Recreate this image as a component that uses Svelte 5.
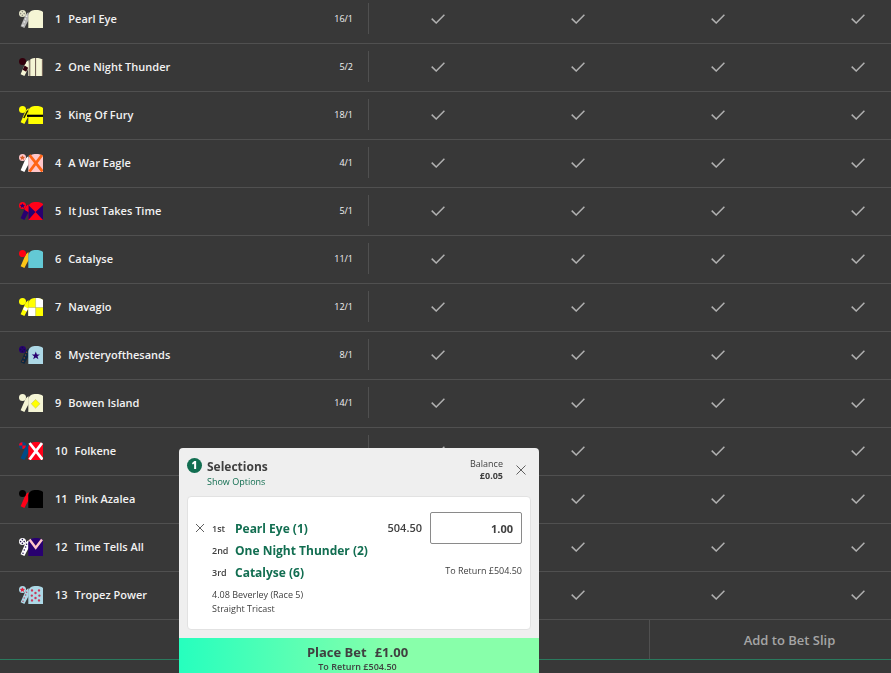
<script lang="ts">
  interface Mark {
    d: string;
    fill?: string;
    stroke?: string;
    width?: number;
  }

  interface Runner {
    name: string;
    odds?: string;
    body: string;
    sleeve: string;
    cap: string;
    marks: Mark[];
  }

  const BODY = 'M9.3 5C10.4 1.2 13 0 17 0c3 0 5.5.6 7 2v16H9.3z';
  const SLEEVE = 'M9.6 2.2C7.6 3 6.4 5 5.4 7.4L1.6 16.2 5.4 18 9.6 10z';
  const CROSS = 'M10.5 1l13 16.5M23 1l-12.5 16.5';
  const STAR =
    'M16.8 5.6l1.1 2.8h3l-2.4 1.9.9 3-2.6-1.7-2.6 1.7.9-3-2.4-1.9h3z';

  const dot = (x: number, y: number, r = 0.8) =>
    `M${x - r} ${y}a${r} ${r} 0 1 0 ${2 * r} 0a${r} ${r} 0 1 0 ${-2 * r} 0z`;

  const capDots = [dot(3.4, 1.6), dot(1.6, 3.6), dot(5.2, 3.6), dot(3.4, 5.4)].join('');
  const capStar = 'M3.4 1.2l.8 1.6 1.8.2-1.3 1.2.4 1.9-1.7-1-1.7 1 .4-1.9L.8 3l1.8-.2z';
  const sleeveDots = [dot(7.6, 6.2), dot(6.6, 9), dot(5.3, 12), dot(4, 15.2)].join('');
  const bodyDots = [
    dot(13, 4.4, 1.2), dot(20, 4.4, 1.2), dot(16.5, 7, 1.2), dot(12.8, 9.6, 1.2),
    dot(20.4, 9.6, 1.2), dot(16.5, 12, 1.2), dot(13, 14.4, 1.2), dot(20, 14.4, 1.2)
  ].join('');

  const runners: Runner[] = [
    {
      name: 'Pearl Eye', odds: '16/1', body: '#f5f5d5', sleeve: '#b4b4b4', cap: '#e6e6cb',
      marks: [{ d: capDots, fill: '#8c8c80' }, { d: sleeveDots, fill: '#f2f2f2' }]
    },
    {
      name: 'One Night Thunder', odds: '5/2', body: '#f5f5d5', sleeve: '#f5f5d5', cap: '#33000c',
      marks: [
        { d: 'M10.8 2v16M16.6 0v18M23.4 1.5V18', stroke: '#67544c', width: 1 },
        { d: 'M5.6 7.4l3.6 2.4-2 4-3.6-2z', fill: '#33000c' }
      ]
    },
    {
      name: 'King Of Fury', odds: '18/1', body: '#ffff00', sleeve: '#ffff00', cap: '#ffff00',
      marks: [
        { d: 'M8 9.8h16', stroke: '#000000', width: 2.2 },
        { d: 'M8.8 4.5L4.8 12', stroke: '#222200', width: 1.5 }
      ]
    },
    {
      name: 'A War Eagle', odds: '4/1', body: '#ffc6c9', sleeve: '#ffffff', cap: '#ffc6c9',
      marks: [{ d: CROSS, stroke: '#ff6414', width: 2.8 }, { d: capStar, fill: '#d85c28' }]
    },
    {
      name: 'It Just Takes Time', odds: '5/1', body: '#ff0018', sleeve: '#280070', cap: '#ff0018',
      marks: [
        { d: 'M9.3 3l7.2 7-7.2 8zM24 3l-7.5 7L24 18z', fill: '#280070' },
        { d: 'M9.6 2.2C7.6 3 6.4 5 5.4 7.8l4 2.4z', fill: '#ff0018' },
        { d: capStar, fill: '#280070' }
      ]
    },
    {
      name: 'Catalyse', odds: '11/1', body: '#63c9d5', sleeve: '#fcc618', cap: '#ff0012', marks: []
    },
    {
      name: 'Navagio', odds: '12/1', body: '#ffff00', sleeve: '#ffff00', cap: '#ffff00',
      marks: [
        { d: 'M16.6 0C20 0 22.5.6 24 2v7.5h-7.4zM9.3 9.5h7.3V18H9.3z', fill: '#ffffff' },
        { d: 'M16.6 0v18M9.3 9.5H24', stroke: '#a8a860', width: 0.5 },
        { d: 'M5.4 8.4l3.6 2-1.4 3-3.6-2z', fill: '#ffffff' }
      ]
    },
    {
      name: 'Mysteryofthesands', odds: '8/1', body: '#add8e6', sleeve: '#0d2740', cap: '#280070',
      marks: [
        { d: STAR, fill: '#280070' },
        { d: sleeveDots, fill: '#8a4a2c' },
        { d: capDots, fill: '#151040' }
      ]
    },
    {
      name: 'Bowen Island', odds: '14/1', body: '#f5f5d5', sleeve: '#f5f5d5', cap: '#f5f5d5',
      marks: [{ d: 'M16.6 5.4l4.4 4.4-4.4 4.4-4.4-4.4z', fill: '#ffff00', stroke: '#b9b95c', width: 0.5 }]
    },
    {
      name: 'Folkene', body: '#ff0018', sleeve: '#004b87', cap: '#004b87',
      marks: [
        { d: CROSS, stroke: '#ffffff', width: 2.8 },
        { d: 'M3.4.2v3.4H0A3.4 3.4 0 0 1 3.4.2zM3.4 7V3.6h3.4A3.4 3.4 0 0 1 3.4 7z', fill: '#ff0018' }
      ]
    },
    {
      name: 'Pink Azalea', body: '#000000', sleeve: '#ff0018', cap: '#000000', marks: []
    },
    {
      name: 'Time Tells All', body: '#280070', sleeve: '#ffffff', cap: '#ffffff',
      marks: [
        { d: 'M10.5 1.5l6.2 8.3L23 1.5', stroke: '#ffc6c9', width: 2.4 },
        { d: sleeveDots + capDots, fill: '#2a1c55' }
      ]
    },
    {
      name: 'Tropez Power', body: '#add8e6', sleeve: '#add8e6', cap: '#add8e6',
      marks: [
        { d: bodyDots, fill: '#c8385a' },
        { d: capStar, fill: '#e0203c' },
        { d: sleeveDots, fill: '#b0506a' }
      ]
    }
  ];

  const places = ['1st', '2nd', '3rd', 'Any'];

  const selections = [
    { place: '1st', name: 'Pearl Eye (1)' },
    { place: '2nd', name: 'One Night Thunder (2)' },
    { place: '3rd', name: 'Catalyse (6)' }
  ];

  let stake = $state('1.00');
</script>

<main class="board">
  {#each runners as runner, i}
    <div class="row">
      <div class="runner">
        <svg class="silk" viewBox="0 0 24 18" aria-hidden="true">
          <path d={SLEEVE} fill={runner.sleeve} />
          <path d={BODY} fill={runner.body} />
          <circle cx="3.5" cy="3.6" r="3.5" fill={runner.cap} />
          {#each runner.marks as mark}
            <path
              d={mark.d}
              fill={mark.fill ?? 'none'}
              stroke={mark.stroke ?? 'none'}
              stroke-width={mark.width ?? 0}
            />
          {/each}
        </svg>
        <span class="number">{i + 1}</span>
        <span class="name">{runner.name}</span>
        {#if runner.odds}
          <span class="odds">{runner.odds}</span>
        {/if}
      </div>
      {#each places as place}
        <button class="pick" aria-label="{runner.name} {place}">
          <svg class="tick" viewBox="0 0 14 10" aria-hidden="true">
            <path d="M.7 4.6L5.2 9 13.4.8" />
          </svg>
        </button>
      {/each}
    </div>
  {/each}
  <div class="actions">
    <button class="add">Add to Bet Slip</button>
  </div>
</main>

<section class="slip">
  <header class="header">
    <span class="badge">1</span>
    <div class="heading">
      <h2 class="title">Selections</h2>
      <a class="options" href="#options">Show Options</a>
    </div>
    <div class="balance">
      <span>Balance</span>
      <strong>£0.05</strong>
    </div>
    <button class="close" aria-label="Close">
      <svg viewBox="0 0 10 10" aria-hidden="true"><path d="M.5.5l9 9M9.5.5l-9 9" /></svg>
    </button>
  </header>

  <div class="card">
    <button class="remove" aria-label="Remove">
      <svg viewBox="0 0 10 10" aria-hidden="true"><path d="M1 1l8 8M9 1l-8 8" /></svg>
    </button>
    <div class="details">
      {#each selections as selection}
        <div class="selection">
          <span class="place">{selection.place}</span>
          <span class="pickname">{selection.name}</span>
        </div>
      {/each}
      <div class="event">
        <span>4.08 Beverley (Race 5)</span>
        <span>Straight Tricast</span>
      </div>
    </div>
    <div class="price">504.50</div>
    <div class="staking">
      <input class="stake" type="text" aria-label="Stake" bind:value={stake} />
      <p class="return">To Return £504.50</p>
    </div>
  </div>

  <button class="place-bet">
    <span class="place-label"><span>Place Bet</span><span>£1.00</span></span>
    <span class="place-return">To Return £504.50</span>
  </button>
</section>

<style>
  :global(body) {
    background: #383838;
    font-family: 'Open Sans', 'Noto Sans', sans-serif;
    overflow: hidden;
  }

  button {
    font-family: inherit;
    border: 0;
    padding: 0;
    background: none;
    cursor: pointer;
  }

  .board {
    width: calc(100% + 38px);
    margin-top: -4px;
  }

  .row {
    display: grid;
    grid-template-columns: 369px repeat(4, 1fr);
    align-items: center;
    height: 48px;
    box-sizing: border-box;
    padding-bottom: 2px;
    border-bottom: 1px solid #505050;
  }

  .runner {
    display: flex;
    align-items: center;
    height: 31px;
    box-sizing: border-box;
    padding: 0 15px 0 19px;
    border-right: 1px solid #505050;
    color: #f2f2f2;
    font-size: 11px;
    font-weight: 600;
  }

  .silk {
    width: 24px;
    height: 18px;
    margin-right: 12px;
  }

  .number {
    margin-right: 7px;
  }

  .odds {
    margin-left: auto;
    font-size: 9px;
    font-weight: 400;
  }

  .pick {
    display: flex;
    align-items: center;
    justify-content: center;
    height: 100%;
    padding-right: 2px;
  }

  .tick {
    width: 14px;
    height: 10px;
    fill: none;
    stroke: #b0b0b0;
    stroke-width: 1.5;
  }

  .actions {
    display: flex;
    justify-content: flex-end;
    height: 39px;
    border-bottom: 1px solid #2a7a5e;
  }

  .add {
    width: 280px;
    box-sizing: border-box;
    border-left: 1px solid #505050;
    color: #a5a5a5;
    font-size: 13px;
    font-weight: 600;
  }

  .slip {
    position: fixed;
    bottom: 0;
    left: 179px;
    width: 360px;
    overflow: hidden;
    border-radius: 4px 4px 0 0;
    background: #efefef;
    color: #404040;
  }

  .header {
    display: flex;
    align-items: flex-start;
    height: 48px;
    box-sizing: border-box;
    padding: 10px 13px 0 8px;
  }

  .badge {
    width: 15px;
    height: 15px;
    border-radius: 50%;
    background: #126e51;
    color: #ffffff;
    font-size: 10px;
    font-weight: 800;
    line-height: 15px;
    text-align: center;
  }

  .heading {
    flex: 1;
    margin-left: 5px;
  }

  .title {
    margin: 0;
    font-size: 12px;
    font-weight: 700;
    line-height: 17px;
  }

  .options {
    display: block;
    color: #126e51;
    font-size: 9px;
    line-height: 14px;
    text-decoration: none;
  }

  .balance {
    display: flex;
    flex-direction: column;
    margin-right: 13px;
    font-size: 9px;
    line-height: 12px;
    text-align: right;
  }

  .close {
    display: flex;
    margin-top: 7px;
  }

  .close svg,
  .remove svg {
    width: 10px;
    height: 10px;
    fill: none;
    stroke: #606060;
  }

  .card {
    display: flex;
    align-items: flex-start;
    height: 134px;
    box-sizing: border-box;
    margin: 0 8px 8px;
    padding: 15px 8px 0 7px;
    border: 1px solid #e2e2e2;
    border-radius: 4px;
    background: #ffffff;
  }

  .remove {
    display: flex;
    margin: 11px 7px 0 0;
  }

  .details {
    flex: 1;
    padding-top: 5px;
  }

  .selection {
    display: flex;
    align-items: center;
    height: 22px;
  }

  .place {
    width: 23px;
    font-size: 9px;
    font-weight: 600;
  }

  .pickname {
    color: #126e51;
    font-size: 12px;
    font-weight: 700;
  }

  .event {
    display: flex;
    flex-direction: column;
    padding-top: 5px;
    font-size: 9px;
    line-height: 14px;
  }

  .price {
    margin-right: 8px;
    font-size: 11px;
    font-weight: 600;
    line-height: 32px;
  }

  .staking {
    width: 92px;
  }

  .stake {
    display: block;
    width: 100%;
    height: 32px;
    box-sizing: border-box;
    padding: 0 8px;
    border: 1px solid #8a8a8a;
    border-radius: 2px;
    background: #ffffff;
    color: #404040;
    font-family: inherit;
    font-size: 11px;
    font-weight: 700;
    text-align: right;
  }

  .return {
    display: flex;
    justify-content: flex-end;
    margin: 20px 0 0;
    font-size: 9px;
    line-height: 14px;
    white-space: nowrap;
  }

  .place-bet {
    display: flex;
    flex-direction: column;
    align-items: center;
    width: 100%;
    height: 35px;
    padding: 5px 3px 0 0;
    background: linear-gradient(90deg, #26ffbe, #88ffaa 60%);
    color: #404040;
  }

  .place-label {
    display: flex;
    gap: 8px;
    font-size: 13px;
    font-weight: 700;
    line-height: 18px;
  }

  .place-return {
    font-size: 9px;
    font-weight: 600;
    line-height: 12px;
  }
</style>
